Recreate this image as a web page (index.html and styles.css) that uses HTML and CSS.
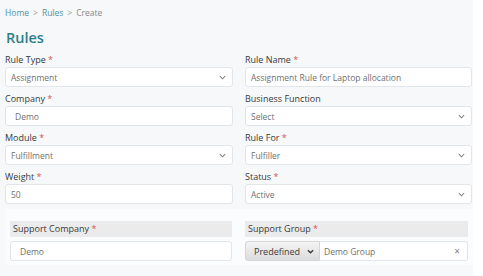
FILE: index.html
```html
<!DOCTYPE html>
<html>
<head>
<meta charset="utf-8">
<link rel="stylesheet" href="styles.css">
</head>
<body>
<div class="page">
  <div class="crumbs"><span class="link">Home</span><span class="sep">&gt;</span><span class="link">Rules</span><span class="sep">&gt;</span><span class="cur">Create</span></div>
  <h1 class="title">Rules</h1>
  <div class="grid">
    <div class="field">
      <div class="label">Rule Type <span class="req">*</span></div>
      <div class="input select"><span>Assignment</span><svg class="chev" viewBox="0 0 8 5"><path d="M1 1l3 3 3-3" /></svg></div>
    </div>
    <div class="field">
      <div class="label">Rule Name <span class="req">*</span></div>
      <div class="input"><span>Assignment Rule for Laptop allocation</span></div>
    </div>
    <div class="field">
      <div class="label">Company <span class="req">*</span></div>
      <div class="input indent"><span>Demo</span></div>
    </div>
    <div class="field">
      <div class="label">Business Function</div>
      <div class="input select"><span>Select</span><svg class="chev" viewBox="0 0 8 5"><path d="M1 1l3 3 3-3" /></svg></div>
    </div>
    <div class="field">
      <div class="label">Module <span class="req">*</span></div>
      <div class="input select"><span>Fulfillment</span><svg class="chev" viewBox="0 0 8 5"><path d="M1 1l3 3 3-3" /></svg></div>
    </div>
    <div class="field">
      <div class="label">Rule For <span class="req">*</span></div>
      <div class="input select"><span>Fulfiller</span><svg class="chev" viewBox="0 0 8 5"><path d="M1 1l3 3 3-3" /></svg></div>
    </div>
    <div class="field">
      <div class="label">Weight <span class="req">*</span></div>
      <div class="input"><span>50</span></div>
    </div>
    <div class="field">
      <div class="label">Status <span class="req">*</span></div>
      <div class="input select"><span>Active</span><svg class="chev" viewBox="0 0 8 5"><path d="M1 1l3 3 3-3" /></svg></div>
    </div>
  </div>
  <div class="section">
    <div class="sfield">
      <div class="sbar">Support Company <span class="req">*</span></div>
      <div class="input indent"><span>Demo</span></div>
    </div>
    <div class="sfield">
      <div class="sbar">Support Group <span class="req">*</span></div>
      <div class="group">
        <div class="pre"><span>Predefined</span><svg class="chev dark" viewBox="0 0 8 5"><path d="M1 1l3 3 3-3" /></svg></div>
        <div class="gtext"><span>Demo Group</span><span class="clear">&times;</span></div>
      </div>
    </div>
  </div>
</div>
</body>
</html>
```
FILE: styles.css
```css
html, body {
  margin: 0;
  padding: 0;
  background: #ffffff;
}
body {
  font-family: "Open Sans", "Liberation Sans", sans-serif;
  font-size: 9px;
  color: #3a3a3a;
}
.page {
  width: 468px;
  height: 276px;
  padding-left: 5px;
  background: #f6f8fa;
  overflow: hidden;
}
.crumbs {
  padding-top: 7px;
  height: 12px;
  line-height: 12px;
  font-size: 8.5px;
  display: flex;
  gap: 4px;
  color: #888;
}
.crumbs .link { color: #4f93a7; }
.crumbs .sep { color: #999; }
.crumbs .cur { color: #8a8a8a; }
.title {
  margin: 9px 0 6px 1px;
  font-size: 14.5px;
  line-height: 20px;
  font-weight: 600;
  color: #2d8089;
}
.grid {
  display: grid;
  grid-template-columns: 228px 227px;
  column-gap: 12px;
  row-gap: 6px;
}
.field {
  display: flex;
  flex-direction: column;
  gap: 1px;
}
.label {
  height: 12px;
  line-height: 12px;
  font-size: 9px;
  color: #3a3a3a;
}
.req { color: #d9534f; }
.input {
  height: 18px;
  background: #fff;
  border: 1px solid #e2e5e9;
  border-radius: 3px;
  display: flex;
  align-items: center;
  justify-content: space-between;
  padding: 0 6px 0 5px;
  color: #707070;
  font-size: 8.5px;
}
.input.indent { padding-left: 9px; }
.chev {
  width: 7px;
  height: 5px;
  fill: none;
  stroke: #808080;
  stroke-width: 1.2;
}
.chev.dark { stroke: #3a3a3a; stroke-width: 1.6; }
.section {
  margin-top: 5px;
  width: 458px;
  height: 44px;
  padding: 12px 5px 0 5px;
  background: #fbfcfd;
  display: grid;
  grid-template-columns: 222px 223px;
  column-gap: 13px;
}
.sfield {
  display: flex;
  flex-direction: column;
  gap: 4px;
}
.sbar {
  height: 16px;
  line-height: 16px;
  background: #ebebeb;
  padding-left: 3px;
  font-size: 9px;
  color: #3a3a3a;
}
.group {
  display: flex;
  height: 20px;
}
.pre {
  width: 60px;
  height: 18px;
  border: 1px solid #d6d6d6;
  border-radius: 3px 0 0 3px;
  background: linear-gradient(#f4f4f4, #dcdcdc);
  display: flex;
  align-items: center;
  justify-content: space-between;
  padding: 0 5px 0 8px;
  color: #3a3a3a;
  font-size: 9px;
}
.gtext {
  flex: 1;
  height: 18px;
  background: #fff;
  border: 1px solid #e2e5e9;
  border-left: none;
  border-radius: 0 3px 3px 0;
  display: flex;
  align-items: center;
  justify-content: space-between;
  padding: 0 7px 0 4px;
  color: #707070;
  font-size: 8.5px;
}
.clear { color: #808080; font-size: 10px; }
```
